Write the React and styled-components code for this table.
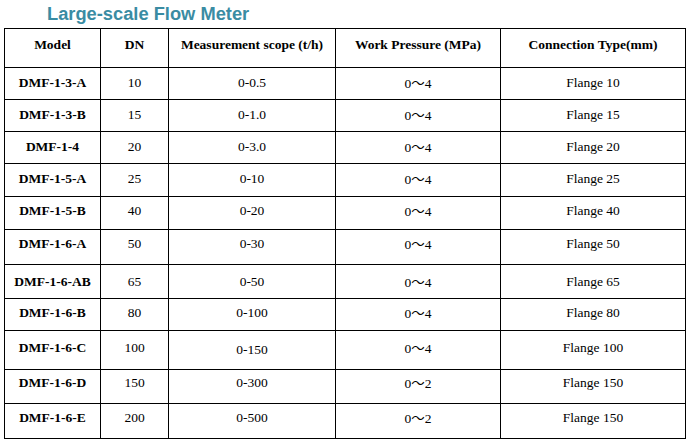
import React from "react";
import styled, { createGlobalStyle } from "styled-components";

const Global = createGlobalStyle`
  html, body { margin: 0; padding: 0; background: #fff; }
  body { font-family: "Liberation Serif", "Times New Roman", serif; color: #000; }
`;

const Page = styled.div`
  padding-left: 4px;
`;

const Title = styled.h1`
  margin: 0;
  padding-left: 43px;
  height: 28px;
  line-height: 28px;
  font-family: "Liberation Sans", Arial, sans-serif;
  font-weight: bold;
  font-size: 18.3px;
  color: #3a8ca3;
`;

const Table = styled.table`
  border-collapse: collapse;
  table-layout: fixed;
  width: 681px;
`;

const Row = styled.tr`
  height: ${(p) => p.$h}px;
`;

const Cell = styled.td`
  border: 1px solid #000;
  padding: 0 0 ${(p) => p.$lift}px 0;
  text-align: center;
  vertical-align: middle;
  white-space: nowrap;
  font-family: "Liberation Serif", "Times New Roman", serif;
  font-size: 13.5px;
  line-height: 16px;
  font-weight: ${(p) => (p.$bold ? "bold" : "normal")};
  color: #000;
`;

const HeadCell = styled(Cell).attrs({ as: "th" })`
  font-weight: bold;
`;

const Tilde = styled.span`
  font-family: "Noto Sans CJK SC", sans-serif;
  font-weight: normal;
  line-height: 16px;
`;

const widths = [96, 68, 167, 165, 185];

const rows = [
  ["DMF-1-3-A", "10", "0-0.5", "4", "Flange 10", 32, 1],
  ["DMF-1-3-B", "15", "0-1.0", "4", "Flange 15", 32, 2],
  ["DMF-1-4", "20", "0-3.0", "4", "Flange 20", 32, 2],
  ["DMF-1-5-A", "25", "0-10", "4", "Flange 25", 33, 3],
  ["DMF-1-5-B", "40", "0-20", "4", "Flange 40", 33, 5],
  ["DMF-1-6-A", "50", "0-30", "4", "Flange 50", 35, 6],
  ["DMF-1-6-AB", "65", "0-50", "4", "Flange 65", 34, 0],
  ["DMF-1-6-B", "80", "0-100", "4", "Flange 80", 32, 3],
  ["DMF-1-6-C", "100", "0-150", "4", "Flange 100", 39, 4],
  ["DMF-1-6-D", "150", "0-300", "2", "Flange 150", 34, 8],
  ["DMF-1-6-E", "200", "0-500", "2", "Flange 150", 35, 6],
];

export default function App() {
  return (
    <Page>
      <Global />
      <Title>Large-scale Flow Meter</Title>
      <Table>
        <colgroup>
          {widths.map((w, i) => (
            <col key={i} style={{ width: w }} />
          ))}
        </colgroup>
        <thead>
          <Row $h={39}>
            {["Model", "DN", "Measurement scope (t/h)", "Work Pressure (MPa)", "Connection Type(mm)"].map((t) => (
              <HeadCell key={t} $lift={7}>{t}</HeadCell>
            ))}
          </Row>
        </thead>
        <tbody>
          {rows.map(([m, dn, sc, wp, ct, h, lift]) => (
            <Row key={m} $h={h}>
              <Cell $bold $lift={lift}>{m}</Cell>
              <Cell $lift={lift}>{dn}</Cell>
              <Cell $lift={m === "DMF-1-6-C" ? 0 : lift}>{sc}</Cell>
              <Cell $lift={lift}>0<Tilde>～</Tilde>{wp}</Cell>
              <Cell $lift={lift}>{ct}</Cell>
            </Row>
          ))}
        </tbody>
      </Table>
    </Page>
  );
}
